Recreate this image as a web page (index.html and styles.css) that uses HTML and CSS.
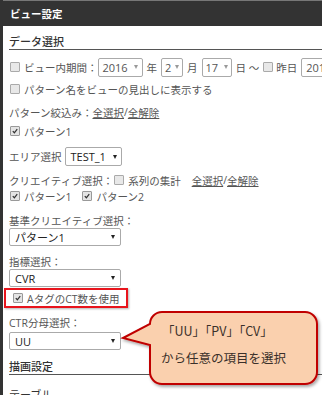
FILE: index.html
```html
<!DOCTYPE html>
<html lang="ja">
<head>
<meta charset="utf-8">
<link rel="stylesheet" href="styles.css">
</head>
<body>
<div class="panel">
  <div class="hd">ビュー設定</div>
  <div class="content">
    <div class="sec sec-first">データ選択</div>
    <div class="row r1">
      <span class="cb"></span><span class="lbl">ビュー内期間：</span>
      <span class="sel sel-gray w45">2016<i class="arr"></i></span><span class="unit">年</span>
      <span class="sel sel-gray w22">2<i class="arr"></i></span><span class="unit">月</span>
      <span class="sel sel-gray w30">17<i class="arr"></i></span><span class="unit">日 ～</span>
      <span class="cb cb-y"></span><span class="lbl lbl-y">昨日</span>
      <span class="sel sel-gray w45 last">2016<i class="arr"></i></span>
    </div>
    <div class="row r2"><span class="cb"></span><span class="lbl">パターン名をビューの見出しに表示する</span></div>
    <div class="row r3"><span>パターン絞込み：</span><a class="lk">全選択</a>/<a class="lk">全解除</a></div>
    <div class="row r4"><span class="cb on"><svg viewBox="0 0 9 9"><path d="M2 4.6 L3.8 6.5 L7 2.4" fill="none" stroke="#333" stroke-width="1.4"/></svg></span><span class="lbl">パターン1</span></div>
    <div class="row r5"><span>エリア選択</span><span class="sel w57 dark">TEST_1<i class="arr blk"></i></span></div>
    <div class="row r6"><span>クリエイティブ選択：</span><span class="cb"></span><span class="lbl">系列の集計</span><a class="lk lk-gap">全選択</a>/<a class="lk">全解除</a></div>
    <div class="row r7"><span class="cb on"><svg viewBox="0 0 9 9"><path d="M2 4.6 L3.8 6.5 L7 2.4" fill="none" stroke="#333" stroke-width="1.4"/></svg></span><span class="lbl">パターン1</span><span class="cb on cb-gap"><svg viewBox="0 0 9 9"><path d="M2 4.6 L3.8 6.5 L7 2.4" fill="none" stroke="#333" stroke-width="1.4"/></svg></span><span class="lbl">パターン2</span></div>
    <div class="row r8">基準クリエイティブ選択：</div>
    <div class="selrow"><span class="sel wide dark">パターン1<i class="arr blk"></i></span></div>
    <div class="row r9">指標選択：</div>
    <div class="selrow"><span class="sel wide dark">CVR<i class="arr blk"></i></span></div>
    <div class="redbox"><span class="cb on"><svg viewBox="0 0 9 9"><path d="M2 4.6 L3.8 6.5 L7 2.4" fill="none" stroke="#333" stroke-width="1.4"/></svg></span><span class="lbl">AタグのCT数を使用</span></div>
    <div class="row r10">CTR分母選択：</div>
    <div class="selrow sr-ctr"><span class="sel wide dark">UU<i class="arr blk"></i></span></div>
    <div class="sec sec-second">描画設定</div>
    <div class="row r11">テーブル</div>
  </div>
</div>
<div class="callout">
  <svg class="bubble" viewBox="0 0 207 90" width="207" height="90">
    <defs>
      <filter id="sh" x="-10%" y="-10%" width="130%" height="140%">
        <feDropShadow dx="1.5" dy="2" stdDeviation="1.5" flood-color="#000" flood-opacity="0.35"/>
      </filter>
    </defs>
    <path d="M42 8 H185 A12 12 0 0 1 197 20 V68 A12 12 0 0 1 185 80 H42 A12 12 0 0 1 30 68 V41 L3 34 L30 20 A12 12 0 0 1 42 8 Z" fill="#fad0ae" stroke="#c00000" stroke-width="2" filter="url(#sh)"/>
  </svg>
  <div class="ctext">
    <div class="l1">「UU」「PV」「CV」</div>
    <div class="l2">から任意の項目を選択</div>
  </div>
</div>
</body>
</html>
```
FILE: styles.css
```css
html, body {
  margin: 0;
  padding: 0;
  background: #fff;
}
body {
  width: 327px;
  height: 395px;
  overflow: hidden;
  position: relative;
  font-family: "Open Sans", "Noto Sans CJK JP", sans-serif;
  font-size: 10.5px;
  color: #555;
}
.panel {
  width: 319px;
  height: 395px;
  border-left: 3px solid #333;
  overflow: hidden;
}
.hd {
  height: 26px;
  line-height: 26px;
  background: #333;
  border-top: 1px solid #777;
  box-sizing: border-box;
  color: #fff;
  font-weight: bold;
  font-size: 10.5px;
  padding-left: 7px;
}
.content {
  padding-left: 6px;
}
.sec {
  color: #333;
  font-size: 11px;
  line-height: 15px;
  border-bottom: 1px solid #555;
  font-weight: 500;
}
.sec-first {
  padding-top: 8px;
  height: 15px;
}
.sec-second {
  margin-top: 2px;
  padding-top: 7px;
  height: 15px;
}
.row {
  display: flex;
  align-items: center;
  height: 16px;
  white-space: nowrap;
}
.r1 { margin-top: 7px; height: 20px; }
.r2 { margin-top: 4px; }
.r3 { margin-top: 7px; }
.r4 { margin-top: 3px; }
.r5 { margin-top: 8px; height: 19px; }
.r6 { margin-top: 6px; }
.r7 { margin-top: 0; }
.r8 { margin-top: 8px; }
.r9 { margin-top: 7px; }
.r10 { margin-top: 6px; }
.r11 { margin-top: 11px; color: #333; font-size: 11px; }

.cb {
  width: 8px;
  height: 8px;
  border: 1px solid #aaa;
  background: #e8e8e8;
  border-radius: 1px;
  margin-left: 1px;
  flex: none;
  display: inline-flex;
}
.cb svg { width: 8px; height: 8px; }
.cb.on { background: #e4e4e4; border-color: #999; }
.cb-gap { margin-left: 11px; }
.cb-y { margin-left: 0; }
.lbl { margin-left: 4px; }
.lbl-y { margin-left: 3px; }
.unit { margin-left: 4px; margin-right: 4px; }
.sel {
  display: inline-flex;
  align-items: center;
  justify-content: space-between;
  box-sizing: border-box;
  height: 19px;
  border: 1px solid #aaa;
  border-radius: 2px;
  background: #fff;
  padding: 0 4px 0 4px;
  font-size: 11px;
  color: #555;
  flex: none;
}
.sel.dark { color: #222; }
.sel.last { margin-left: 4px; }
.w45 { width: 45px; }
.w22 { width: 22px; padding: 0 3px; }
.w30 { width: 30px; padding: 0 3px; }
.w57 { width: 57px; margin-left: 3px; padding: 0 4px 0 5px; }
.wide { width: 112px; height: 18px; padding: 0 5px 0 5px; }
.arr {
  width: 0;
  height: 0;
  border-left: 2.5px solid transparent;
  border-right: 2.5px solid transparent;
  border-top: 4px solid #999;
  margin-left: 3px;
}
.arr.blk { border-top-color: #222; }
.selrow { display: flex; margin-top: 0; }
.sr-ctr { margin-top: 2px; }
.lk { text-decoration: underline; color: #555; }
.lk-gap { margin-left: 11px; }
.redbox {
  display: flex;
  align-items: center;
  width: 115px;
  height: 16px;
  margin-left: -5px;
  margin-top: 1px;
  border: 2px solid #e8141c;
  box-shadow: 1px 1px 2px rgba(0,0,0,0.3);
  padding-left: 5px;
  white-space: nowrap;
  color: #555;
}
.redbox .cb { margin-left: 2px; }
.callout {
  position: absolute;
  left: 120px;
  top: 304px;
  width: 207px;
  height: 90px;
}
.bubble { position: absolute; left: 0; top: 0; }
.ctext {
  position: absolute;
  left: 41px;
  top: 18px;
  font-size: 12.5px;
  color: #3a302a;
  font-family: "Noto Sans CJK JP", sans-serif;
}
.l1 { line-height: 18px; margin-left: 1px; }
.l2 { line-height: 18px; margin-top: 9px; }
```
